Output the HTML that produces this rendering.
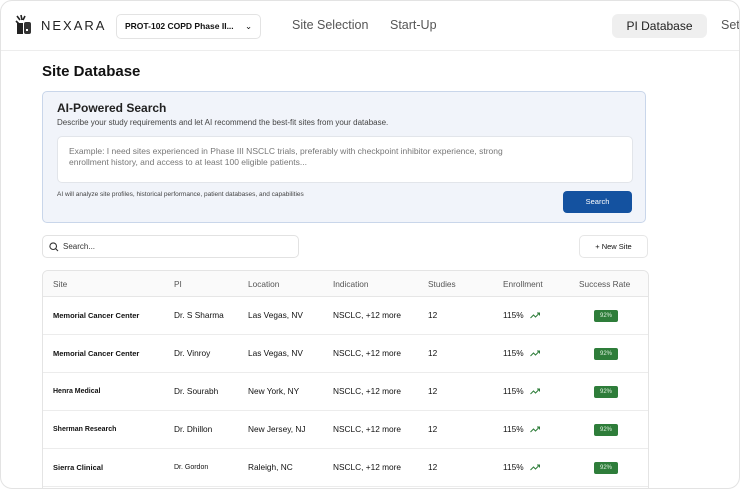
<!DOCTYPE html>
<html><head><meta charset="utf-8"><style>
*{box-sizing:border-box;margin:0;padding:0}
body{width:741px;height:490px;background:#fff;font-family:"Liberation Sans",sans-serif;color:#111;position:relative;overflow:hidden}
.frame{position:absolute;left:0;top:0;width:740px;height:489px;border:1px solid #e3e3e3;border-radius:12px;overflow:hidden}
.hdr{position:absolute;left:0;top:0;width:740px;height:50px;border-bottom:1px solid #ededed}
.abs{position:absolute;white-space:nowrap}
.nav{font-size:12.5px;color:#555}
.ai{position:absolute;left:41px;top:90px;width:604px;height:132px;background:#f1f4fa;border:1px solid #c9d6ea;border-radius:5px}
.ta{position:absolute;left:14px;top:44px;width:576px;height:47px;background:#fff;border:1px solid #e2e5ea;border-radius:5px;font-size:8.5px;color:#777;padding:9px 110px 9px 11px;line-height:11px}
.btn{position:absolute;left:520px;top:99px;width:69px;height:22px;background:#1452a0;border-radius:4px;color:#fff;font-size:7.5px;text-align:center;line-height:22px}
.srch{position:absolute;left:41px;top:234px;width:257px;height:23px;border:1px solid #e2e2e2;border-radius:5px;font-size:8px;color:#333;line-height:21px;padding-left:20px}
.new{position:absolute;left:578px;top:234px;width:69px;height:23px;border:1px solid #e6e6e6;border-radius:5px;font-size:7.5px;text-align:center;line-height:21px}
.tbl{position:absolute;left:41px;top:269px;width:607px;height:240px;border:1px solid #e4e4e4;border-radius:6px;overflow:hidden}
.th{position:absolute;left:0;top:0;width:100%;height:26px;background:#fafafa;border-bottom:1px solid #e6e6e6;font-size:8.3px;color:#555}
.row{position:absolute;left:0;width:100%;height:38px;border-bottom:1px solid #ececec;font-size:8.3px}
.c{position:absolute;top:0;white-space:nowrap}
.th .c{line-height:26px}
.row .c{line-height:37px}
.b{font-weight:bold;font-size:7.5px}
.pill{display:inline-block;background:#2e7d3a;color:#dff0df;font-size:6px;width:24px;height:12px;line-height:12px;text-align:center;border-radius:2px;vertical-align:middle}
.tr{display:inline-block;vertical-align:middle;margin-left:6px}
</style></head><body>
<div class="frame">
<div class="hdr">
 <svg class="abs" style="left:14px;top:13px" width="18" height="22" viewBox="0 0 18 22"><path d="M2 2l3 4M6 1l1 5M10 2l-2 4M1 7l3 3" stroke="#222" stroke-width="1.6"/><rect x="2" y="9" width="6" height="11" fill="#222"/><rect x="9" y="8" width="7" height="12" rx="2" fill="#333"/><rect x="11" y="15" width="2" height="2" fill="#fff"/></svg>
 <div class="abs" style="left:40px;top:17px;font-size:13px;letter-spacing:2px;color:#222">NEXARA</div>
 <div class="abs" style="left:115px;top:13px;width:145px;height:25px;border:1px solid #e3e3e3;border-radius:5px;font-size:8.5px;font-weight:bold;line-height:23px;padding-left:8px">PROT-102 COPD Phase II...<span style="position:absolute;left:128px;top:0;font-weight:normal">&#8964;</span></div>
 <div class="abs nav" style="left:291px;top:17px">Site Selection</div>
 <div class="abs nav" style="left:389px;top:17px">Start-Up</div>
 <div class="abs" style="left:611px;top:13px;width:95px;height:24px;background:#efefef;border-radius:6px;font-size:12px;color:#222;text-align:center;line-height:24px">PI Database</div>
 <div class="abs nav" style="left:720px;top:17px">Settings</div>
</div>
<div class="abs" style="left:41px;top:62px;font-size:15px;font-weight:bold">Site Database</div>
<div class="ai">
 <div class="abs" style="left:14px;top:9px;font-size:12px;color:#222;font-weight:bold;-webkit-text-stroke:0">AI-Powered Search</div>
 <div class="abs" style="left:14px;top:26px;font-size:8px;color:#444">Describe your study requirements and let AI recommend the best-fit sites from your database.</div>
 <div class="ta">Example: I need sites experienced in Phase III NSCLC trials, preferably with checkpoint inhibitor experience, strong enrollment history, and access to at least 100 eligible patients...</div>
 <div class="abs" style="left:14px;top:99px;font-size:6.5px;color:#444">AI will analyze site profiles, historical performance, patient databases, and capabilities</div>
 <div class="btn">Search</div>
</div>
<div class="srch"><svg style="position:absolute;left:6px;top:6px" width="10" height="10" viewBox="0 0 10 10"><circle cx="4.2" cy="4.2" r="3.3" fill="none" stroke="#333" stroke-width="1.1"/><path d="M6.6 6.6L9 9" stroke="#333" stroke-width="1.1"/></svg>Search...</div>
<div class="new">+ New Site</div>
<div class="tbl">
 <div class="th"><span class="c" style="left:10px">Site</span><span class="c" style="left:131px">PI</span><span class="c" style="left:205px">Location</span><span class="c" style="left:290px">Indication</span><span class="c" style="left:385px">Studies</span><span class="c" style="left:460px">Enrollment</span><span class="c" style="left:536px">Success Rate</span></div>
 <div class="row" style="top:26px"><span class="c b" style="left:10px">Memorial Cancer Center</span><span class="c" style="left:131px">Dr. S Sharma</span><span class="c" style="left:205px">Las Vegas, NV</span><span class="c" style="left:290px">NSCLC, +12 more</span><span class="c" style="left:385px">12</span><span class="c" style="left:460px">115%<svg class="tr" width="11" height="7" viewBox="0 0 11 7"><path d="M0.5 6l3-3 2 2 4-4M7 1h2.5v2.5" fill="none" stroke="#2e7d3a" stroke-width="1"/></svg></span><span class="c" style="left:551px"><span class="pill">92%</span></span></div>
 <div class="row" style="top:64px"><span class="c b" style="left:10px">Memorial Cancer Center</span><span class="c" style="left:131px">Dr. Vinroy</span><span class="c" style="left:205px">Las Vegas, NV</span><span class="c" style="left:290px">NSCLC, +12 more</span><span class="c" style="left:385px">12</span><span class="c" style="left:460px">115%<svg class="tr" width="11" height="7" viewBox="0 0 11 7"><path d="M0.5 6l3-3 2 2 4-4M7 1h2.5v2.5" fill="none" stroke="#2e7d3a" stroke-width="1"/></svg></span><span class="c" style="left:551px"><span class="pill">92%</span></span></div>
 <div class="row" style="top:102px"><span class="c b" style="left:10px;font-size:7px">Henra Medical</span><span class="c" style="left:131px">Dr. Sourabh</span><span class="c" style="left:205px">New York, NY</span><span class="c" style="left:290px">NSCLC, +12 more</span><span class="c" style="left:385px">12</span><span class="c" style="left:460px">115%<svg class="tr" width="11" height="7" viewBox="0 0 11 7"><path d="M0.5 6l3-3 2 2 4-4M7 1h2.5v2.5" fill="none" stroke="#2e7d3a" stroke-width="1"/></svg></span><span class="c" style="left:551px"><span class="pill">92%</span></span></div>
 <div class="row" style="top:140px"><span class="c b" style="left:10px;font-size:7px">Sherman Research</span><span class="c" style="left:131px">Dr. Dhillon</span><span class="c" style="left:205px">New Jersey, NJ</span><span class="c" style="left:290px">NSCLC, +12 more</span><span class="c" style="left:385px">12</span><span class="c" style="left:460px">115%<svg class="tr" width="11" height="7" viewBox="0 0 11 7"><path d="M0.5 6l3-3 2 2 4-4M7 1h2.5v2.5" fill="none" stroke="#2e7d3a" stroke-width="1"/></svg></span><span class="c" style="left:551px"><span class="pill">92%</span></span></div>
 <div class="row" style="top:178px"><span class="c b" style="left:10px">Sierra Clinical</span><span class="c" style="left:131px;font-size:7px">Dr. Gordon</span><span class="c" style="left:205px">Raleigh, NC</span><span class="c" style="left:290px">NSCLC, +12 more</span><span class="c" style="left:385px">12</span><span class="c" style="left:460px">115%<svg class="tr" width="11" height="7" viewBox="0 0 11 7"><path d="M0.5 6l3-3 2 2 4-4M7 1h2.5v2.5" fill="none" stroke="#2e7d3a" stroke-width="1"/></svg></span><span class="c" style="left:551px"><span class="pill">92%</span></span></div>
</div>
</div>
</body></html>
